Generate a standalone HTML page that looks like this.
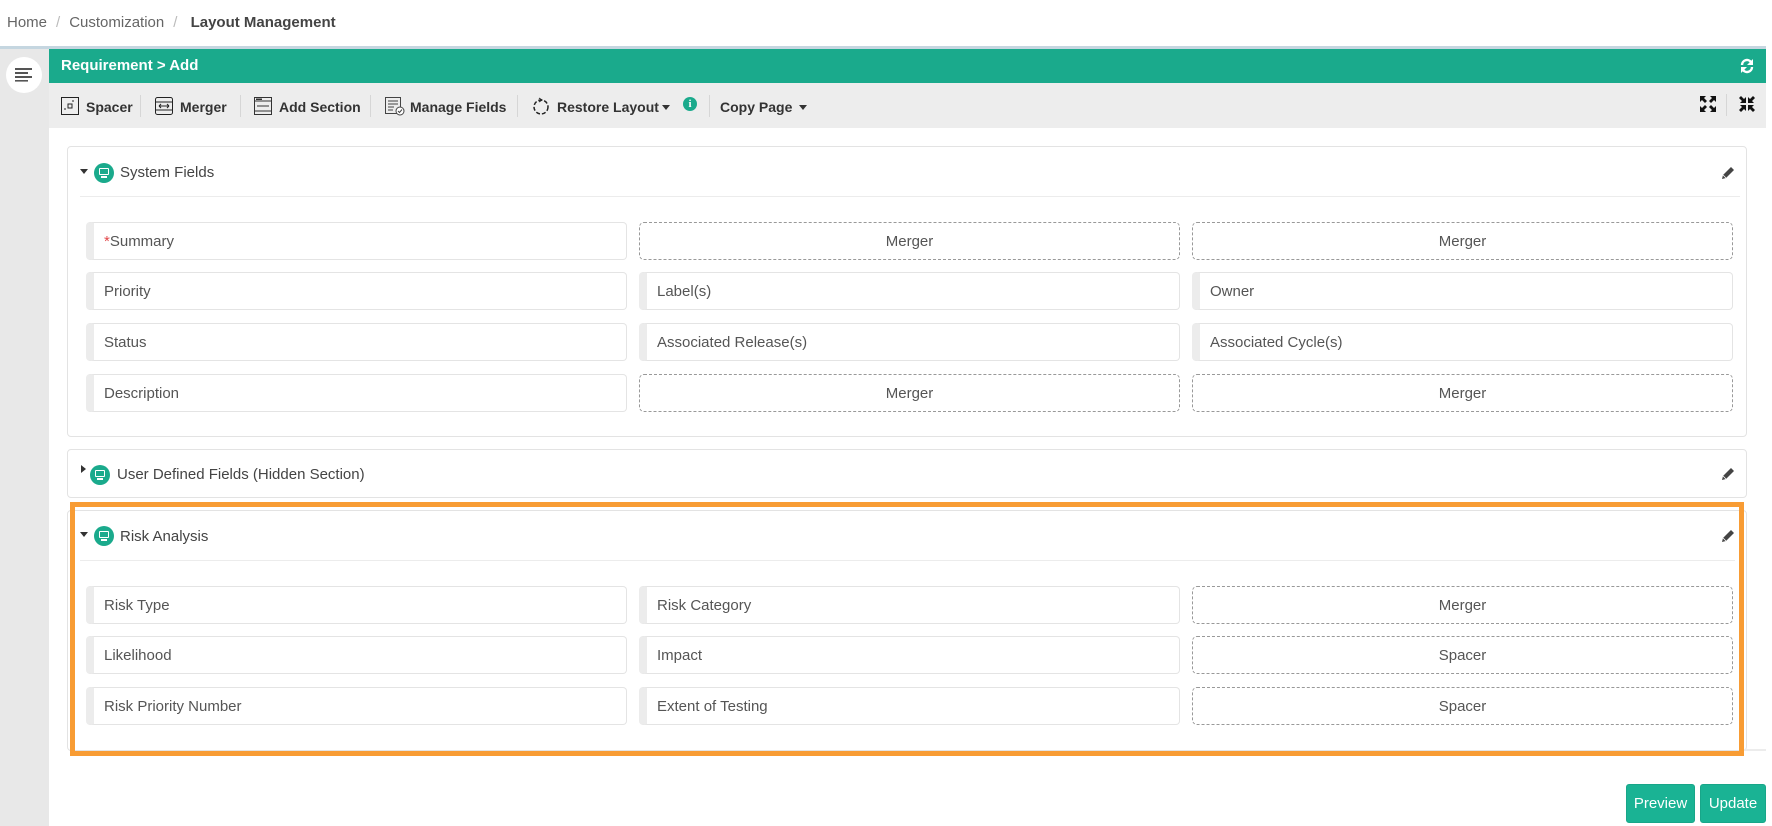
<!DOCTYPE html>
<html><head><meta charset="utf-8"><style>
*{box-sizing:border-box;margin:0;padding:0}
body{width:1772px;height:826px;position:relative;background:#fff;font-family:"Liberation Sans",sans-serif;overflow:hidden;color:#555}
.a{position:absolute}
.crumb{top:14px;left:7px;font-size:15px;color:#666;white-space:nowrap}
.crumb b{color:#444}
.crumb i{font-style:normal;color:#bbb;margin:0 9px}
.tb{font-size:14px;font-weight:bold;color:#333;top:99px;white-space:nowrap}
.sep{width:1px;height:22px;background:#d6d6d6;top:95px}
.card{background:#fff;border:1px solid #e3e3e3;border-radius:4px}
.hd{font-size:15px;color:#444;white-space:nowrap}
.mon{width:20px;height:20px;border-radius:50%;background:#1aaa8c}
.mon:after{content:"";position:absolute;left:5px;top:5px;width:10px;height:7px;border:1.5px solid #fff;border-radius:1px;box-sizing:border-box}
.mon:before{content:"";position:absolute;left:7px;top:13px;width:6px;height:2px;background:#fff}
.tri{width:0;height:0;border-left:4px solid transparent;border-right:4px solid transparent;border-top:5px solid #333}
.trr{width:0;height:0;border-top:4px solid transparent;border-bottom:4px solid transparent;border-left:5px solid #333}
.f{height:38px;border:1px solid #e4e4e4;border-left:8px solid #ececec;border-radius:4px;font-size:15px;color:#555;line-height:38px;padding-left:10px;white-space:nowrap}
.m{height:38px;border:1px dashed #999;border-radius:5px;font-size:15px;color:#555;line-height:38px;text-align:center}
.btn{background:#1ab394;border:1px solid #18a689;border-radius:3px;color:#fff;font-size:15px;text-align:center;line-height:37px;height:39px;top:784px}
</style></head><body>
<svg width="0" height="0" style="position:absolute"><defs><symbol id="pen" viewBox="0 0 14 14"><path d="M10 1l3 3-8 8-4 1 1-4z" fill="#444"/><path d="M2 9l3 3" stroke="#fff" stroke-width="0.8"/></symbol></defs></svg>
<div class="a crumb">Home<i>/</i>Customization<i>/</i> <b>Layout Management</b></div>
<div class="a" style="left:0;top:46px;width:1766px;height:3px;background:#c5d6e0"></div>
<div class="a" style="left:0;top:49px;width:49px;height:777px;background:#e8e8e8"></div>
<div class="a" style="left:6px;top:57px;width:36px;height:36px;border-radius:50%;background:#fff"></div>
<svg class="a" style="left:14px;top:67px" width="20" height="15"><g fill="#555"><rect x="1" y="1" width="17" height="2"/><rect x="1" y="5" width="13" height="2"/><rect x="1" y="9" width="17" height="2"/><rect x="1" y="13" width="13" height="1.6"/></g></svg>
<div class="a" style="left:49px;top:49px;width:1717px;height:34px;background:#1aaa8c"></div>
<div class="a" style="left:61px;top:57px;color:#fff;font-weight:bold;font-size:15px">Requirement &gt; Add</div>
<svg class="a" style="left:1739px;top:58px" width="16" height="16" viewBox="0 0 16 16"><path d="M3 7a5 5 0 0 1 9-3" stroke="#fff" stroke-width="2.4" fill="none"/><path d="M14 1v6h-6z" fill="#fff"/><path d="M13 9a5 5 0 0 1-9 3" stroke="#fff" stroke-width="2.4" fill="none"/><path d="M2 15v-6h6z" fill="#fff"/></svg>
<div class="a" style="left:49px;top:83px;width:1717px;height:45px;background:#ededed"></div>
<svg class="a" style="left:61px;top:97px" width="18" height="18"><rect x="0.5" y="0.5" width="17" height="17" fill="none" stroke="#222"/><rect x="7" y="7" width="4" height="4" fill="none" stroke="#222"/><path d="M4 13v-2M13 4h-2" stroke="#222"/></svg>
<div class="a tb" style="left:86px">Spacer</div><div class="a sep" style="left:140px"></div>
<svg class="a" style="left:155px;top:97px" width="18" height="18"><rect x="0.5" y="0.5" width="17" height="17" rx="2" fill="none" stroke="#222"/><path d="M1 5h16M1 13h16M4 9h10M4 9l2-2M4 9l2 2M14 9l-2-2M14 9l-2 2" stroke="#222" fill="none"/></svg>
<div class="a tb" style="left:180px">Merger</div><div class="a sep" style="left:240px"></div>
<svg class="a" style="left:254px;top:97px" width="18" height="18"><rect x="0.5" y="0.5" width="17" height="17" fill="none" stroke="#333"/><path d="M1 4h16M1 14h16M3 9h12" stroke="#333"/><rect x="2" y="1.5" width="6" height="1.5" fill="#333"/></svg>
<div class="a tb" style="left:279px">Add Section</div><div class="a sep" style="left:370px"></div>
<svg class="a" style="left:385px;top:97px" width="20" height="19"><rect x="0.5" y="0.5" width="15" height="16" fill="none" stroke="#444"/><path d="M3 4h10M3 7h10M3 10h6M3 13h5" stroke="#444"/><circle cx="15" cy="14" r="4" fill="#fff" stroke="#444"/><path d="M13 14l1.5 1.5L17 12.5" stroke="#444" fill="none"/></svg>
<div class="a tb" style="left:410px">Manage Fields</div><div class="a sep" style="left:517px"></div>
<svg class="a" style="left:532px;top:97px" width="18" height="18"><circle cx="9" cy="10" r="7" fill="none" stroke="#222" stroke-width="1.5" stroke-dasharray="4 2"/><path d="M7 1l3 2-3 2" stroke="#222" fill="none"/></svg>
<div class="a tb" style="left:557px">Restore Layout</div><div class="a tri" style="left:662px;top:105px"></div>
<div class="a" style="left:683px;top:97px;width:14px;height:14px;border-radius:50%;background:#1aaa8c;color:#fff;font-size:11px;font-weight:bold;text-align:center;line-height:14px;font-family:'Liberation Serif',serif">i</div>
<div class="a sep" style="left:709px"></div>
<div class="a tb" style="left:720px">Copy Page</div><div class="a tri" style="left:799px;top:105px"></div>
<svg class="a" style="left:1700px;top:96px" width="16" height="16"><g fill="#111"><path d="M0 0h6l-2 2 3 3-2 2-3-3-2 2z"/><path d="M16 0v6l-2-2-3 3-2-2 3-3-2-2z"/><path d="M0 16v-6l2 2 3-3 2 2-3 3 2 2z"/><path d="M16 16h-6l2-2-3-3 2-2 3 3 2-2z"/></g></svg>
<div class="a sep" style="left:1726px;top:94px"></div>
<svg class="a" style="left:1739px;top:96px" width="16" height="16"><g fill="#111"><path d="M7 7h-6l2-2-3-3 2-2 3 3 2-2z"/><path d="M9 7v-6l2 2 3-3 2 2-3 3 2 2z"/><path d="M7 9v6l-2-2-3 3-2-2 3-3-2-2z"/><path d="M9 9h6l-2 2 3 3-2 2-3-3-2 2z"/></g></svg>

<!-- card 1 -->
<div class="a card" style="left:67px;top:146px;width:1680px;height:291px"></div>
<div class="a tri" style="left:80px;top:169px"></div><div class="a mon" style="left:94px;top:163px"></div>
<div class="a hd" style="left:120px;top:164px">System Fields</div>
<svg class="a" style="left:1721px;top:166px" width="14" height="14"><use href="#pen"/></svg>
<div class="a" style="left:80px;top:196px;width:1660px;height:1px;background:#ececec"></div>
<div class="a f" style="left:86px;top:222px;width:541px"><span style="color:#e2494b">*</span>Summary</div>
<div class="a m" style="left:639px;top:222px;width:541px">Merger</div>
<div class="a m" style="left:1192px;top:222px;width:541px">Merger</div>
<div class="a f" style="left:86px;top:272px;width:541px">Priority</div>
<div class="a f" style="left:639px;top:272px;width:541px">Label(s)</div>
<div class="a f" style="left:1192px;top:272px;width:541px">Owner</div>
<div class="a f" style="left:86px;top:323px;width:541px">Status</div>
<div class="a f" style="left:639px;top:323px;width:541px">Associated Release(s)</div>
<div class="a f" style="left:1192px;top:323px;width:541px">Associated Cycle(s)</div>
<div class="a f" style="left:86px;top:374px;width:541px">Description</div>
<div class="a m" style="left:639px;top:374px;width:541px">Merger</div>
<div class="a m" style="left:1192px;top:374px;width:541px">Merger</div>

<!-- card 2 -->
<div class="a card" style="left:67px;top:449px;width:1680px;height:49px"></div>
<div class="a trr" style="left:81px;top:465px"></div><div class="a mon" style="left:90px;top:465px"></div>
<div class="a hd" style="left:117px;top:466px">User Defined Fields (Hidden Section)</div>
<svg class="a" style="left:1721px;top:467px" width="14" height="14"><use href="#pen"/></svg>

<!-- card 3 -->
<div class="a card" style="left:67px;top:510px;width:1680px;height:241px"></div>
<div class="a" style="left:1744px;top:749px;width:22px;height:2px;background:#ececec"></div>
<div class="a" style="left:70px;top:502px;width:1674px;height:254px;border:5px solid #f89c34"></div>
<div class="a tri" style="left:80px;top:532px"></div><div class="a mon" style="left:94px;top:526px"></div>
<div class="a hd" style="left:120px;top:528px">Risk Analysis</div>
<svg class="a" style="left:1721px;top:529px" width="14" height="14"><use href="#pen"/></svg>
<div class="a" style="left:80px;top:560px;width:1655px;height:1px;background:#ececec"></div>
<div class="a f" style="left:86px;top:586px;width:541px">Risk Type</div>
<div class="a f" style="left:639px;top:586px;width:541px">Risk Category</div>
<div class="a m" style="left:1192px;top:586px;width:541px">Merger</div>
<div class="a f" style="left:86px;top:636px;width:541px">Likelihood</div>
<div class="a f" style="left:639px;top:636px;width:541px">Impact</div>
<div class="a m" style="left:1192px;top:636px;width:541px">Spacer</div>
<div class="a f" style="left:86px;top:687px;width:541px">Risk Priority Number</div>
<div class="a f" style="left:639px;top:687px;width:541px">Extent of Testing</div>
<div class="a m" style="left:1192px;top:687px;width:541px">Spacer</div>

<div class="a btn" style="left:1626px;width:69px">Preview</div>
<div class="a btn" style="left:1700px;width:66px">Update</div>
</body></html>
